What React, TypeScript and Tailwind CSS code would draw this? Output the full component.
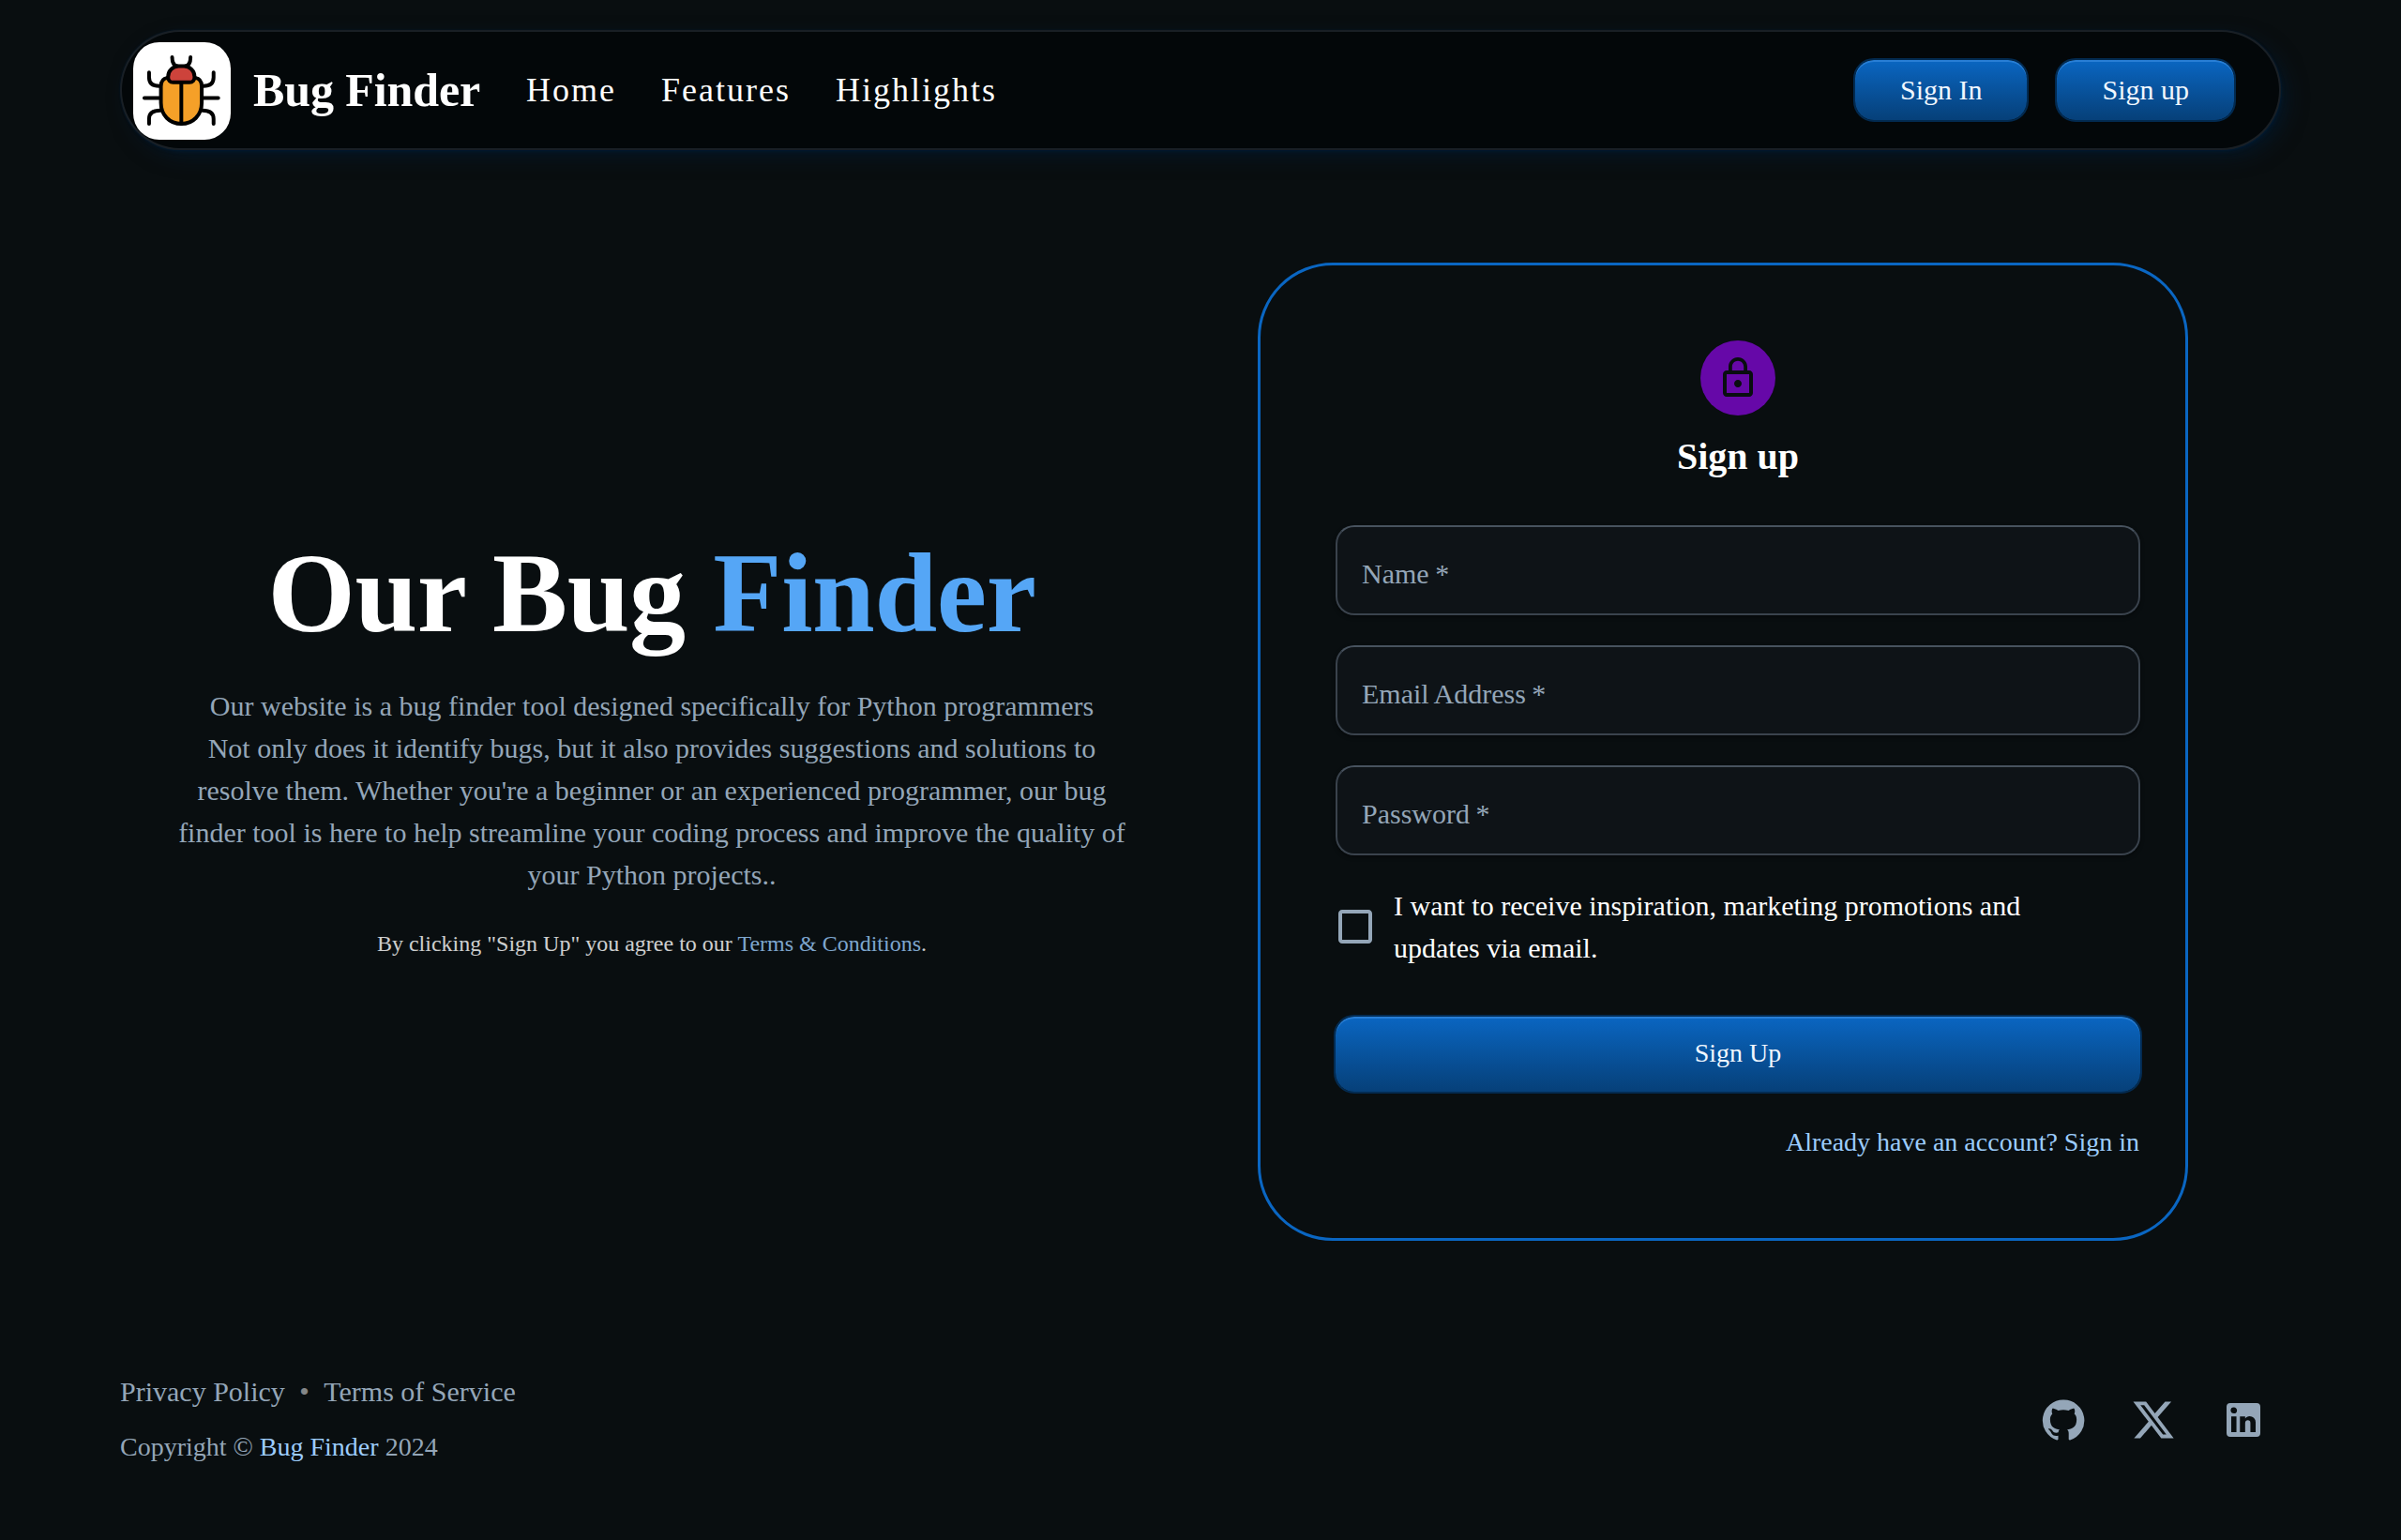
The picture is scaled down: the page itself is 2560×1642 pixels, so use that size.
import React from "react";

const BUTTON =
  "flex items-center justify-center rounded-[20px] bg-linear-to-b from-[#0A66C2] to-[#064079] pb-0.5 text-[#F0F7FF] outline-2 outline-[#033363]/80 shadow-[inset_0_2px_0_rgba(85,166,246,0.4)]";

function BugLogo() {
  const legs = "M51 97v16c0 20 12 28 33 28M36 179h47M51 262v-16c0-18 12-27 36-27M125 48c0 18 5 27 17 29";
  return (
    <svg viewBox="0 0 313 313" className="mt-px size-[104px] shrink-0" fill="none" strokeWidth="12" strokeLinecap="round" strokeLinejoin="round">
      <rect width="313" height="313" rx="84" fill="#fff" />
      <g stroke="#000">
        <path d={legs} />
        <path d={legs} transform="matrix(-1 0 0 1 309 0)" />
        <path d="M110 114c-14 2-21 13-21 28v52c0 40 28 68 65.500 68s65.500-28 65.500-68v-52c0-15-7-26-21-28z" fill="#F5A028" />
        <path d="M154.500 128v134" />
        <path d="M112 111c0-19 15-34 34-34h17c19 0 34 15 34 34 0 11-6 18-16 18h-53c-10 0-16-7-16-18z" fill="#CD433B" />
      </g>
    </svg>
  );
}

function Icon({ d, className }: { d: string; className: string }) {
  return (
    <svg viewBox="0 0 24 24" fill="currentColor" className={className}>
      <path d={d} />
    </svg>
  );
}

const LOCK =
  "M12 17c1.100 0 2-.9 2-2s-.9-2-2-2-2 .9-2 2 .9 2 2 2m6-9h-1V6c0-2.760-2.240-5-5-5S7 3.240 7 6v2H6c-1.100 0-2 .9-2 2v10c0 1.100.9 2 2 2h12c1.100 0 2-.9 2-2V10c0-1.100-.9-2-2-2M8.900 6c0-1.710 1.390-3.100 3.100-3.100s3.100 1.390 3.100 3.100v2H8.900zM18 20H6V10h12z";
const CHECKBOX = "M19 5v14H5V5h14m0-2H5c-1.100 0-2 .9-2 2v14c0 1.100.9 2 2 2h14c1.100 0 2-.9 2-2V5c0-1.100-.9-2-2-2z";
const GITHUB =
  "M12 1.270a11 11 0 00-3.480 21.460c.55.09.73-.28.73-.55v-1.840c-3.030.64-3.670-1.460-3.670-1.460-.55-1.290-1.280-1.650-1.280-1.650-.92-.65.1-.65.1-.65 1.100 0 1.730 1.100 1.730 1.100.92 1.650 2.570 1.200 3.210.92a2 2 0 01.64-1.470c-2.470-.27-5.040-1.190-5.040-5.500 0-1.100.46-2.100 1.200-2.840a3.760 3.760 0 010-2.930s.91-.28 3.110 1.100c1.800-.49 3.700-.49 5.500 0 2.100-1.380 3.020-1.100 3.020-1.100a3.760 3.760 0 01.1 2.930c.83.74 1.200 1.740 1.200 2.940 0 4.210-2.570 5.130-5.040 5.400.45.37.82.92.82 2.020v3.030c0 .27.1.64.73.55A11 11 0 0012 1.270";
const X_LOGO =
  "M18.244 2.250h3.308l-7.227 8.260 8.502 11.240H16.170l-5.214-6.817L4.990 21.750H1.680l7.730-8.835L1.254 2.250H8.080l4.713 6.231zm-1.161 17.520h1.833L7.084 4.126H5.117z";
const LINKEDIN =
  "M19 3a2 2 0 0 1 2 2v14a2 2 0 0 1-2 2H5a2 2 0 0 1-2-2V5a2 2 0 0 1 2-2h14m-.5 15.500v-5.300a3.260 3.260 0 0 0-3.260-3.260c-.85 0-1.840.52-2.320 1.300v-1.110h-2.790v8.370h2.790v-4.930c0-.77.62-1.400 1.390-1.400a1.400 1.400 0 0 1 1.400 1.400v4.930h2.790M6.880 8.560a1.680 1.680 0 0 0 1.680-1.680c0-.93-.75-1.690-1.680-1.690a1.690 1.690 0 0 0-1.690 1.690c0 .93.76 1.680 1.690 1.680m1.390 9.940v-8.370H5.500v8.370h2.770z";

function Header() {
  return (
    <header className="mx-32 mt-8 flex h-32 items-center rounded-full border-2 border-[#4C5967]/30 bg-[#030709] pl-3 pr-12 shadow-[0_0_2px_rgba(2,31,59,0.7),2px_3px_4px_-2px_rgba(2,31,59,0.65),8px_8px_24px_-5px_rgba(2,31,59,0.65)]">
      <BugLogo />
      <span className="ml-6 text-[50px] leading-[60px] font-bold tracking-[-0.1px] text-white">Bug Finder</span>
      <nav className="ml-[49px] flex gap-12 text-4xl leading-[54px] tracking-[2px] text-white">
        <a>Home</a>
        <a>Features</a>
        <a>Highlights</a>
      </nav>
      <div className="ml-auto flex gap-8 text-[30px]">
        <button className={BUTTON + " h-16 px-12"}>Sign In</button>
        <button className={BUTTON + " h-16 px-12"}>Sign up</button>
      </div>
    </header>
  );
}

function Field({ label }: { label: string }) {
  return (
    <div className="flex h-24 items-center rounded-[20px] border-2 border-[#3A434D] border-t-[#47525E] bg-[#0E1317] px-[26px] pt-1.5 text-[30px] text-[#94A6B8] [word-spacing:-1px] shadow-[0_2px_4px_rgba(0,0,0,0.4)]">
      {label}
    </div>
  );
}

export default function App() {
  return (
    <div className="flex h-[1642px] w-[2560px] flex-col overflow-hidden bg-[#090E10] font-['Liberation_Serif',serif]">
      <Header />
      <main className="mt-[120px] flex h-[1043px] pl-32">
        <section className="flex w-[1134px] flex-col items-center pt-[281px] text-center">
          <h1 className="text-[120px] leading-[144px] font-bold tracking-[-0.4px] text-white">
            Our Bug <span className="text-[#55A6F6]">Finder</span>
          </h1>
          <p className="mt-[25px] text-[30px] leading-[45px] text-[#94A6B8]">
            Our website is a bug finder tool designed specifically for Python programmers
            <br />
            Not only does it identify bugs, but it also provides suggestions and solutions to
            <br />
            resolve them. Whether you're a beginner or an experienced programmer, our bug
            <br />
            finder tool is here to help streamline your coding process and improve the quality of
            <br />
            your Python projects..
          </p>
          <p className="mt-[31px] text-2xl leading-10 text-white opacity-80">
            By clicking "Sign Up" you agree to our <a className="text-[#9CCCFC]">Terms &amp; Conditions</a>.
          </p>
        </section>
        <form className="ml-[79px] flex w-[992px] flex-col rounded-[80px] border-3 border-[#0A66C2] pt-20 pr-12 pl-20">
          <div className="flex size-20 items-center justify-center self-center rounded-full bg-[#6608A8] text-[#090E10]">
            <Icon d={LOCK} className="size-12" />
          </div>
          <h2 className="mt-3.5 self-center text-[40px] leading-[60px] font-bold text-white">Sign up</h2>
          <div className="mt-[43px] flex flex-col gap-8">
            <Field label="Name *" />
            <Field label="Email Address *" />
            <Field label="Password *" />
          </div>
          <label className="mt-[31px] flex items-center text-[30px] leading-[45px] text-white">
            <Icon d={CHECKBOX} className="-ml-[3px] size-12 shrink-0 text-[#94A6B8]" />
            <span className="ml-[17px]">
              I want to receive inspiration, marketing promotions and
              <br />
              updates via email.
            </span>
          </label>
          <button type="button" className={BUTTON + " mt-[51px] h-20 text-[28px]"}>Sign Up</button>
          <a className="mt-[33px] mr-px self-end text-[28px] leading-[42px] text-[#9CCCFC]">Already have an account? Sign in</a>
        </form>
      </main>
      <footer className="mt-[138px] flex items-center pr-36 pl-32 text-[#94A6B8]">
        <div>
          <div className="flex text-[30px] leading-[45px]">
            <a>Privacy Policy</a>
            <span className="mx-2 whitespace-pre text-white opacity-50">{" • "}</span>
            <a>Terms of Service</a>
          </div>
          <div className="mt-4 text-[28px] leading-[42px]">
            Copyright © <a className="text-[#9CCCFC]">Bug Finder</a> 2024
          </div>
        </div>
        <div className="ml-auto flex gap-12 pt-0.5">
          <Icon d={GITHUB} className="size-12" />
          <Icon d={X_LOGO} className="size-12" />
          <Icon d={LINKEDIN} className="size-12" />
        </div>
      </footer>
    </div>
  );
}
